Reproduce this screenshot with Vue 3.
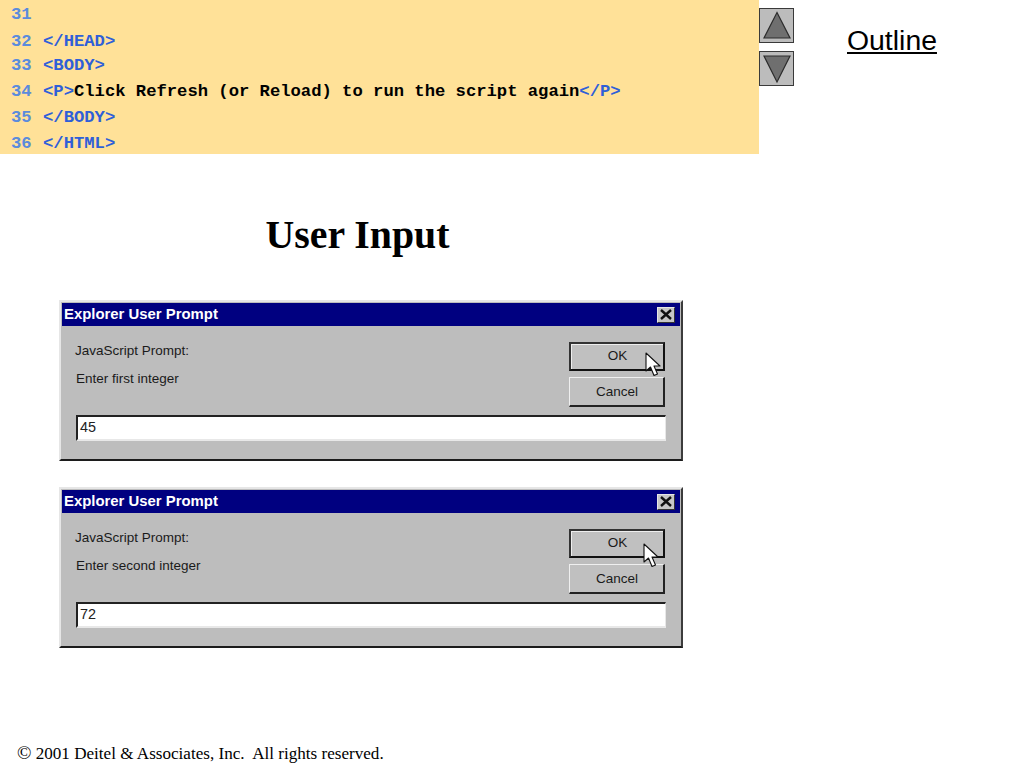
<script setup>
const code = [
  { n: 31, parts: [], h: 27 },
  { n: 32, parts: [['t', '</HEAD>']], h: 27 },
  { n: 33, parts: [['t', '<BODY>']], h: 22 },
  { n: 34, parts: [['t', '<P>'], ['x', 'Click Refresh (or Reload) to run the script again'], ['t', '</P>']], h: 30 },
  { n: 35, parts: [['t', '</BODY>']], h: 22 },
  { n: 36, parts: [['t', '</HTML>']], h: 29 },
]
const dialogs = [
  { msg: 'Enter first integer', value: '45', cursor: 'cur-a' },
  { msg: 'Enter second integer', value: '72', cursor: 'cur-b' },
]
</script>

<template>
  <div class="slide">
    <div class="top">
      <div class="code">
        <div v-for="l in code" :key="l.n" class="line" :style="{ height: l.h + 'px' }">
          <span class="num">{{ l.n }}</span>
          <span><span v-for="(p, i) in l.parts" :key="i" :class="p[0] === 't' ? 'tag' : 'txt'">{{ p[1] }}</span></span>
        </div>
      </div>
      <div class="nav">
        <div class="navbtn">
          <svg width="33" height="33" viewBox="0 0 33 33"><path d="M17 3.5 L30 29 L4 29 Z" fill="#6f6f6f" stroke="#2c2c2c" stroke-width="1.2"/></svg>
        </div>
        <div class="navbtn">
          <svg width="33" height="33" viewBox="0 0 33 33"><path d="M4 4 L30 4 L17 30 Z" fill="#6f6f6f" stroke="#2c2c2c" stroke-width="1.2"/></svg>
        </div>
      </div>
      <div class="outline">Outline</div>
    </div>

    <h1 class="title">User Input</h1>

    <div class="dialogs">
      <div v-for="d in dialogs" :key="d.msg" class="dialog">
        <div class="titlebar">
          <span>Explorer User Prompt</span>
          <span class="close">
            <svg width="14" height="11" viewBox="0 0 14 11"><path d="M2 1 L12 10 M12 1 L2 10" stroke="#111" stroke-width="2.4" fill="none"/></svg>
          </span>
        </div>
        <div class="body">
          <div class="msgrow">
            <div class="msgs">
              <div class="m1">JavaScript Prompt:</div>
              <div class="m2">{{ d.msg }}</div>
            </div>
            <div class="btns">
              <div class="btn ok">OK</div>
              <div class="btn cancel">Cancel</div>
            </div>
          </div>
          <div class="input">{{ d.value }}</div>
        </div>
        <svg class="cursor" :class="d.cursor" width="18" height="27" viewBox="0 0 18 27">
          <path d="M1 1 L1 19 L5.5 15 L9 23.5 L12.5 22 L9 14 L15 14 Z" fill="#fff" stroke="#111" stroke-width="1.1" stroke-linejoin="round"/>
        </svg>
      </div>
    </div>

    <div class="footer"><span class="copy">©</span> 2001 Deitel &amp; Associates, Inc.&nbsp; All rights reserved.</div>
  </div>
</template>

<style scoped>
.slide {
  width: 1024px;
  height: 768px;
  background: #fff;
  display: flex;
  flex-direction: column;
  overflow: hidden;
  position: relative;
}
.top { display: flex; height: 153px; flex: none; }
.code {
  width: 759px;
  height: 154px;
  background: #ffe198;
  font: bold 17.2px/1 "Liberation Mono", monospace;
  flex: none;
  box-sizing: border-box;
  padding-top: 1px;
}
.line { display: flex; align-items: center; padding-left: 11px; white-space: pre; }
.num { width: 32px; color: #5b8bdc; flex: none; }
.tag { color: #2f5fd8; }
.txt { color: #000; }
.nav {
  display: flex;
  flex-direction: column;
  gap: 8px;
  margin: 8px 0 0 0;
}
.navbtn {
  width: 33px;
  height: 33px;
  background: #bcbcbc;
  border: 1px solid #3a3a3a;
  display: flex;
}
.outline {
  margin: 23px 0 0 53px;
  font: 28.4px/34px "Liberation Sans", Arial, sans-serif;
  text-decoration: underline;
  color: #000;
  height: 34px;
}
.title {
  margin: 59px 0 0 0;
  width: 715px;
  text-align: center;
  font: bold 39.8px/46px "Liberation Serif", "Times New Roman", serif;
  color: #000;
}
.dialogs {
  margin: 42px 0 0 59px;
  display: flex;
  flex-direction: column;
  gap: 26px;
}
.dialog {
  position: relative;
  width: 624px;
  height: 161px;
  box-sizing: border-box;
  background: #bdbdbd;
  border-top: 2px solid #e6e6e6;
  border-left: 2px solid #e6e6e6;
  border-right: 2px solid #3c3c3c;
  border-bottom: 2px solid #1c1c1c;
  padding: 1px;
  font-family: "Liberation Sans", Arial, sans-serif;
  color: #1a1a1a;
}
.titlebar {
  height: 23px;
  background: #000080;
  color: #fff;
  font-weight: bold;
  font-size: 14.9px;
  display: flex;
  align-items: center;
  justify-content: space-between;
  padding: 0 5px 0 2px;
}
.titlebar > span:first-child { margin-top: -2px; }
.close {
  width: 18px;
  height: 16px;
  box-sizing: border-box;
  background: #c6c6c6;
  border: 1px solid #e6e6e6;
  border-right-color: #333;
  border-bottom-color: #333;
  display: flex;
  align-items: center;
  justify-content: center;
}
.body { padding: 16px 14px 0 13px; font-size: 13.5px; }
.msgrow { display: flex; justify-content: space-between; }
.m1 { line-height: 18px; height: 18px; }
.m2 { margin-top: 10px; margin-left: 1px; line-height: 18px; }
.btns { display: flex; flex-direction: column; gap: 6px; margin-right: 1px; }
.btn {
  width: 96px;
  box-sizing: border-box;
  background: #c0c0c0;
  display: flex;
  align-items: center;
  justify-content: center;
  font-size: 13.5px;
}
.ok {
  height: 29px;
  border: 2px solid #111;
  border-top-color: #333;
  border-left-color: #333;
  box-shadow: inset 1px 1px 0 #eee;
  padding: 0 0 2px 1px;
}
.cancel {
  height: 30px;
  border-top: 1px solid #efefef;
  border-left: 1px solid #efefef;
  border-right: 2px solid #222;
  border-bottom: 2px solid #222;
  padding: 0 0 1px 1px;
}
.input {
  margin: 8px 0 0 1px;
  height: 26px;
  width: 590px;
  box-sizing: border-box;
  background: #fff;
  border-top: 2px solid #222;
  border-left: 2px solid #222;
  border-right: 1px solid #e8e8e8;
  border-bottom: 2px solid #e8e8e8;
  padding-left: 2px;
  line-height: 21px;
  font-size: 14.4px;
  color: #222;
}
.cursor { position: absolute; }
.cur-a { left: 584px; top: 50px; }
.cur-b { left: 582px; top: 54px; }
.footer {
  position: absolute;
  left: 17px;
  top: 744px;
  font: 17.1px/18px "Liberation Serif", "Times New Roman", serif;
  color: #000;
}
.copy { font-size: 19px; line-height: 18px; }
</style>
